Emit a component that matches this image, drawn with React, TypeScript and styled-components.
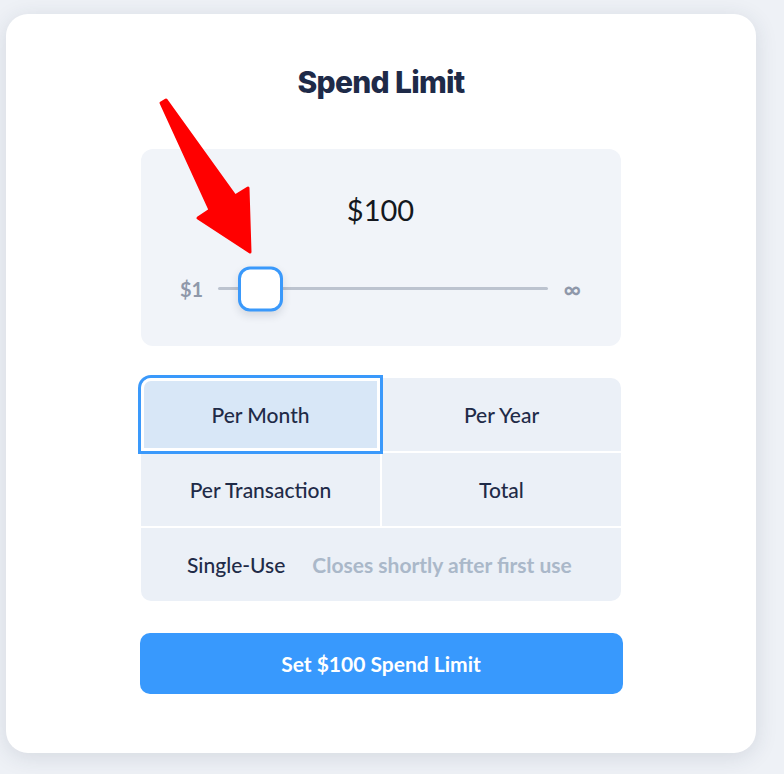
import React, { FC } from "react";
import styled, { createGlobalStyle } from "styled-components";

const GlobalStyle = createGlobalStyle`
  html, body {
    margin: 0;
    padding: 0;
    background: #eef1f6;
    font-family: "Lato", "Noto Sans", sans-serif;
  }
`;

type Period = { id: string; label: string };

const periods: Period[] = [
  { id: "month", label: "Per Month" },
  { id: "year", label: "Per Year" },
  { id: "transaction", label: "Per Transaction" },
  { id: "total", label: "Total" },
];

const SpendSlider: FC<{ position: number }> = ({ position }) => (
  <SliderRow>
    <EdgeLabel>$1</EdgeLabel>
    <Track>
      <Thumb style={{ left: position }} />
    </Track>
    <Infinity>∞</Infinity>
  </SliderRow>
);

const Arrow: FC = () => (
  <ArrowSvg width="300" height="260" viewBox="0 0 300 260">
    <polygon
      points="155,89 160,86 229,182 242,174 244,238 192,204 204,196"
      fill="#ff0000"
      stroke="#ff0000"
      strokeWidth="3"
      strokeLinejoin="round"
    />
  </ArrowSvg>
);

export default function App() {
  const selected = "month";

  return (
    <>
      <GlobalStyle />
      <Page>
        <Card>
          <Title>Spend Limit</Title>
          <AmountPanel>
            <Amount>$100</Amount>
            <SpendSlider position={20} />
          </AmountPanel>
          <OptionGrid>
            {periods.map((p, i) => (
              <Option key={p.id} $active={p.id === selected} $corner={i}>
                {p.label}
              </Option>
            ))}
            <SingleUse>
              <span>Single-Use</span>
              <Hint>Closes shortly after first use</Hint>
            </SingleUse>
          </OptionGrid>
          <SubmitButton>Set $100 Spend Limit</SubmitButton>
          <Arrow />
        </Card>
      </Page>
    </>
  );
}

const Page = styled.div`
  padding: 14px 28px 21px 6px;
`;

const Card = styled.div`
  position: relative;
  width: 750px;
  height: 739px;
  box-sizing: border-box;
  background: #fff;
  border-radius: 22px;
  box-shadow: 0 4px 22px rgba(40, 52, 80, 0.13);
  display: flex;
  flex-direction: column;
  align-items: center;
  padding-top: 51px;
`;

const Title = styled.h1`
  margin: 0;
  font-family: "Inter", "Lato", sans-serif;
  font-weight: 800;
  font-size: 30px;
  line-height: 34px;
  letter-spacing: -0.7px;
  color: #1e2a48;
`;

const AmountPanel = styled.div`
  margin-top: 50px;
  width: 480px;
  height: 197px;
  box-sizing: border-box;
  background: #f1f4f9;
  border-radius: 12px;
  display: flex;
  flex-direction: column;
  align-items: center;
  padding: 42px 40px 0 39px;
`;

const Amount = styled.div`
  font-size: 29px;
  line-height: 38px;
  color: #141820;
`;

const SliderRow = styled.div`
  margin-top: 45px;
  width: 100%;
  display: flex;
  align-items: center;
  gap: 15px;
`;

const EdgeLabel = styled.span`
  font-size: 20px;
  font-weight: 700;
  color: #8f98aa;
`;

const Infinity = styled.span`
  font-size: 24px;
  font-weight: 700;
  color: #8f98aa;
`;

const Track = styled.div`
  position: relative;
  flex: 1;
  height: 3px;
  background: #bcc3cf;
  border-radius: 2px;
`;

const Thumb = styled.div`
  position: absolute;
  top: 50%;
  width: 45px;
  height: 45px;
  box-sizing: border-box;
  transform: translateY(-50%);
  background: #fff;
  border: 3px solid #3a99fb;
  border-radius: 12px;
  box-shadow: 0 4px 9px rgba(30, 40, 70, 0.14);
`;

const OptionGrid = styled.div`
  margin-top: 32px;
  width: 480px;
  display: grid;
  grid-template-columns: 239px 239px;
  grid-auto-rows: 73px;
  gap: 2px;
`;

const radii = ["10px 0 0 0", "0 10px 0 0", "0", "0"];

const Option = styled.div<{ $active: boolean; $corner: number }>`
  display: flex;
  align-items: center;
  justify-content: center;
  font-size: 21px;
  font-weight: 500;
  color: #1f2b48;
  background: ${(p) => (p.$active ? "#d8e7f7" : "#ebf0f7")};
  border-radius: ${(p) => radii[p.$corner]};
  ${(p) =>
    p.$active &&
    `
    position: relative;
    z-index: 1;
    box-shadow: 0 0 0 3px #3a99fb, inset 0 0 0 3px #fff;
  `}
`;

const SingleUse = styled.div`
  grid-column: 1 / span 2;
  display: flex;
  align-items: center;
  gap: 27px;
  padding-left: 46px;
  font-size: 21px;
  font-weight: 500;
  color: #1f2b48;
  background: #ebf0f7;
  border-radius: 0 0 10px 10px;
`;

const Hint = styled.span`
  font-weight: 700;
  color: #aab8c9;
`;

const SubmitButton = styled.button`
  margin-top: 32px;
  width: 483px;
  height: 61px;
  border: none;
  border-radius: 10px;
  background: #3899fd;
  color: #fff;
  font-family: "Lato", sans-serif;
  font-weight: 700;
  font-size: 21px;
  cursor: pointer;
`;

const ArrowSvg = styled.svg`
  position: absolute;
  left: 0;
  top: 0;
  pointer-events: none;
`;
